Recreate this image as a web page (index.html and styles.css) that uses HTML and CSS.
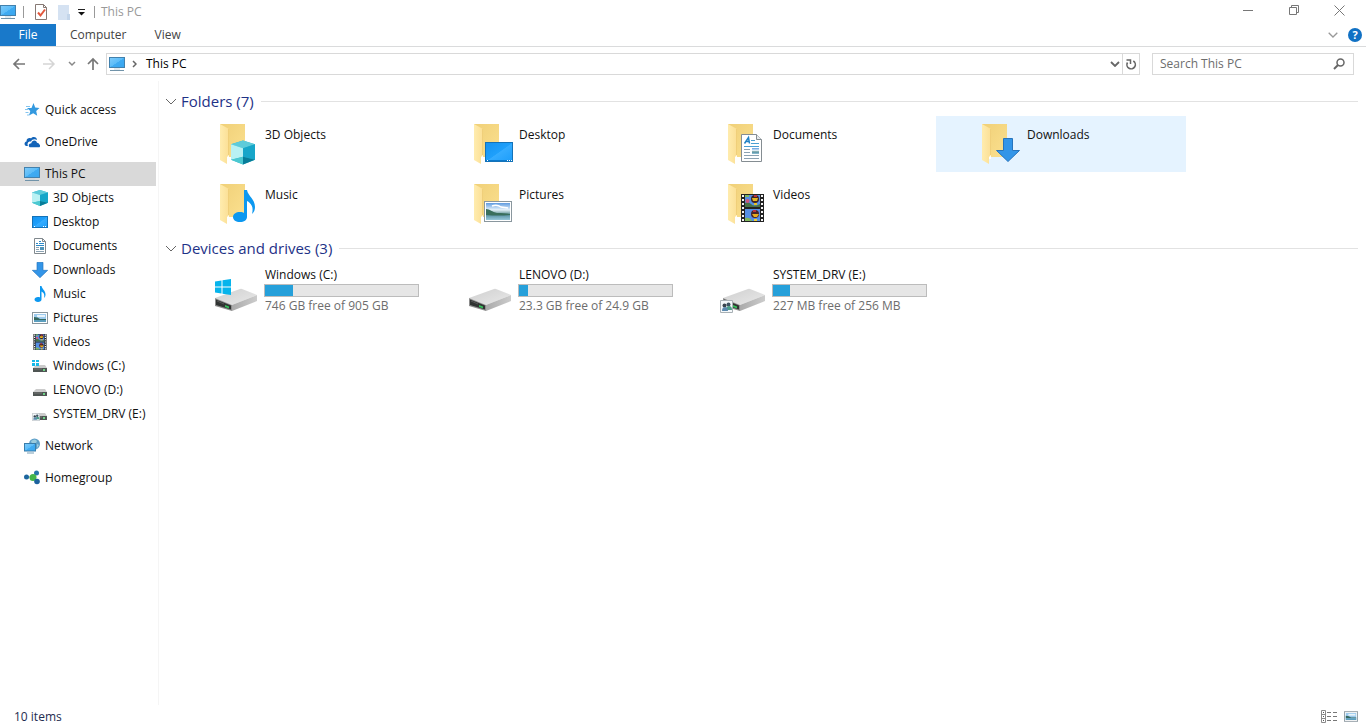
FILE: index.html
```html
<!DOCTYPE html>
<html lang="en">
<head>
<meta charset="utf-8">
<title>This PC</title>
<link rel="stylesheet" href="styles.css">
</head>
<body>
<svg class="defs" aria-hidden="true">
  <defs>
    <linearGradient id="g-screen" x1="0" y1="0" x2="1" y2="1"><stop offset="0" stop-color="#7fcbfb"/><stop offset=".5" stop-color="#5bbcf8"/><stop offset=".52" stop-color="#3fabf2"/><stop offset="1" stop-color="#3aa6ef"/></linearGradient>
    <linearGradient id="g-desk" x1="0" y1="0" x2="1" y2="1"><stop offset="0" stop-color="#1492f0"/><stop offset=".5" stop-color="#1fa0fb"/><stop offset=".52" stop-color="#35acff"/><stop offset="1" stop-color="#1c9dfa"/></linearGradient>
    <linearGradient id="g-back" x1="0" y1="0" x2="1" y2="1"><stop offset="0" stop-color="#f0d078"/><stop offset="1" stop-color="#fbe08f"/></linearGradient>
    <linearGradient id="g-flap" x1="0" y1="0" x2="1" y2="0"><stop offset="0" stop-color="#ffecae"/><stop offset="1" stop-color="#fbdf95"/></linearGradient>
    <linearGradient id="g-sky" x1="0" y1="0" x2="0" y2="1"><stop offset="0" stop-color="#5f9be0"/><stop offset=".4" stop-color="#e6f2fa"/><stop offset=".6" stop-color="#7fa9ac"/><stop offset=".7" stop-color="#5a93a5"/><stop offset="1" stop-color="#98c8da"/></linearGradient>
    <linearGradient id="g-top" x1="0" y1="0" x2="1" y2="1"><stop offset="0" stop-color="#cfcfcf"/><stop offset="1" stop-color="#e9e9e9"/></linearGradient>
    <linearGradient id="g-side" x1="0" y1="0" x2="1" y2="0"><stop offset="0" stop-color="#aaa"/><stop offset="1" stop-color="#ccc"/></linearGradient>
  </defs>
  <symbol id="pc" viewBox="0 0 16 16">
    <rect x=".5" y="1.5" width="15" height="10" fill="url(#g-screen)" stroke="#4281ad"/>
    <path d="M5 13h6" stroke="#c5d5df"/><path d="M1 14.5h14" stroke="#7193a9"/>
  </symbol>
  <symbol id="cube" viewBox="0 0 25 25">
    <path d="M0 4 12.500 0 25 4v16l-12.500 5L0 20z" fill="#36b8cc"/>
    <path d="M0 4 12.500 0 25 4 12.500 8z" fill="#5ecbda"/>
    <path d="M0 4 12.500 8v9L0 20z" fill="#b9f1f3"/>
    <path d="M12.500 8 25 4v16l-12.500-3z" fill="#17a6c9"/>
    <path d="M0 20l12.500-3v8z" fill="#4cc9d1"/><path d="M25 20l-12.500-3v8z" fill="#077d99"/>
  </symbol>
  <symbol id="desktop" viewBox="0 0 28 20">
    <rect x=".5" y=".5" width="27" height="19" fill="url(#g-desk)" stroke="#1472b8"/>
    <path d="M1 18.500h26" stroke="#0b78ca"/><path d="M2 18.500h1M22 18.500h1M24 18.500h1M26 18.500h1" stroke="#fff"/>
  </symbol>
  <symbol id="desktop-small" viewBox="0 0 16 12">
    <rect x=".5" y=".5" width="15" height="11" fill="url(#g-desk)" stroke="#1472b8"/><path d="M2 10.500h1M11 10.500h1M13 10.500h1" stroke="#fff"/>
  </symbol>
  <symbol id="doc" viewBox="0 0 21 28">
    <path d="M.5.5h15l5 5v22H.5z" fill="#fff" stroke="#858d92"/><path d="M15.500.5v5h5" fill="#e6e9eb" stroke="#858d92"/>
    <path d="M3.500 9.500 7.500 3.500 8.500 9.500M5 7.500h3" stroke="#2182c4" stroke-width="1.500" fill="none"/>
    <path d="M10 6.500h4M10 9.500h8M3 12.500h15" stroke="#4aa0d3"/>
    <path d="M3 15.500h6M3 18.500h6M3 21.500h15M3 24.500h15" stroke="#8ba2b2"/>
    <rect x="11" y="14" width="7" height="6" fill="url(#g-sky)"/>
  </symbol>
  <symbol id="doc-small" viewBox="0 0 16 16">
    <path d="M2.500.5h8l3 3v12h-11z" fill="#fff" stroke="#80888d"/><path d="M10.500.5v3h3" fill="none" stroke="#80888d"/>
    <path d="M4 5.500h2M7 3.500h2M7 5.500h5M4 7.500h8" stroke="#2b8ac8"/><path d="M4 9.500h3M4 11.500h3M4 13.500h8" stroke="#8ba2b2"/><path d="M8 9h4v3H8z" fill="#4f93b8"/>
  </symbol>
  <symbol id="down" viewBox="0 0 24 24">
    <path d="M7.500.5h9v12h7L12 23.500.500 12.500h7z" fill="#3395e8" stroke="#2674bd"/>
  </symbol>
  <symbol id="note" viewBox="0 0 22 32">
    <path d="M11 0h3c1 6 8 9 8 17 0 3-1 5-3 7 2-7-1-11-5-13v16c0 3-3 5-7 5s-7-2-7-5 3-5 7-5c2 0 3 0 4 1z" fill="#0c98f0"/>
  </symbol>
  <symbol id="picture" viewBox="0 0 28 21">
    <rect x=".5" y=".5" width="27" height="20" fill="#fff" stroke="#8a979e"/>
    <rect x="2" y="2" width="24" height="17" fill="url(#g-sky)"/>
    <path d="M2 8c4 0 6 3 11 4 5 0 9 0 13 1v1q-12 1-24 0z" fill="#3a6f5c"/><path d="M8 5q5-2 9 1l7 1" stroke="#fff" stroke-width="1.500" fill="none"/>
  </symbol>
  <symbol id="picture-small" viewBox="0 0 16 12">
    <rect x=".5" y=".5" width="15" height="11" fill="#fff" stroke="#8a979e"/>
    <rect x="2" y="2" width="12" height="8" fill="#9dcbee"/><path d="M5 3h8v2H5z" fill="#e9f4fb"/><path d="M2 5q4 0 6 2h6v1H2z" fill="#35685f"/><path d="M2 8h12v2H2z" fill="#5c9fbe"/>
  </symbol>
  <symbol id="film" viewBox="0 0 23 28">
    <path d="M0 0h23v28H0z" fill="#222"/>
    <path d="M2 1v27M21 1v27" stroke="#f5f5f5" stroke-width="2" stroke-dasharray="2 2"/>
    <path d="M4 1h15v12H4zM4 15h15v12H4z" fill="#568fe3"/>
    <path d="M4 9q3-2 6 1t9 0v3H4z" fill="#487247"/><path d="M4 1h4v2H4zM4 24q5-1 7 3H4z" fill="#80b75c"/>
    <ellipse cx="14" cy="5" rx="4" ry="4" fill="#3b2326"/><path d="M11 4h6l-1 3h-4z" fill="#e5b520"/><path d="M13 9h3v2h-3z" fill="#e4c22a"/>
    <circle cx="6.500" cy="7" r="2" fill="#cd587b"/><ellipse cx="14" cy="20" rx="4" ry="4" fill="#482527"/><path d="M11 20h7l-2 3h-3z" fill="#e5ad20"/><path d="M13 1h3v2h-3zM12 16h3v2h-3z" fill="#ba3540"/><path d="M13 25h3v2h-3z" fill="#f0cf33"/>
  </symbol>
  <symbol id="folder" viewBox="0 0 48 48">
    <path d="M8 4h25v33H15z" fill="url(#g-back)"/><path d="M13 33h4v6h-4z" fill="#fff" opacity=".9"/>
    <path d="M8 4l9 5v26l-2 2v7l-7-4z" fill="url(#g-flap)"/><path d="M16.500 9v26" stroke="#f0cf7a"/>
  </symbol>
  <symbol id="drive" viewBox="0 0 48 48">
    <path d="M3 31 28 22q1-.5 2 0l15 6-25 10z" fill="url(#g-top)"/>
    <path d="M20 38l25-10v6L20 44z" fill="url(#g-side)"/>
    <path d="M3 31l17 7v6L3 39z" fill="#8d8d8d"/><path d="M4 32.500l15 6v4L4 38z" fill="#303332"/>
    <path d="M13 38l4 1.500v2L13 40z" fill="#35bf5b"/><path d="M5 34l7 3" stroke="#555"/>
  </symbol>
  <symbol id="winlogo" viewBox="0 0 16 16">
    <path d="M0 2.500 6.500 1.500V7.500H0zM7.500 1.300 16 0v7.500H7.500zM0 8.500h6.500v6L0 13.500zM7.500 8.500H16V16l-8.500-1.300z" fill="#06b4ec"/>
  </symbol>
  <symbol id="minidrive" viewBox="0 0 16 16">
    <path d="M4 7h9l2 3H1z" fill="#cbcbcb"/><path d="M1 10h14v4H1z" fill="#4f5553"/><path d="M2 11h8" stroke="#777"/><path d="M11 12h2" stroke="#6fd387" stroke-width="2"/>
  </symbol>
  <symbol id="people" viewBox="0 0 13 13">
    <path d="M.5.5h12v12H.5z" fill="#f4f8fa" stroke="#a8b0b5"/>
    <circle cx="8.500" cy="4.500" r="2" fill="#3e5362"/><path d="M6 10q0-4 3-4t3 4z" fill="#4b9e88"/>
    <circle cx="4.500" cy="5.500" r="2" fill="#38444e"/><path d="M2 11q0-4 3-4t3 4z" fill="#5b89ae"/>
  </symbol>
  <symbol id="chev" viewBox="0 0 10 6"><path d="M.7.7 5 5 9.300.7" fill="none" stroke="currentColor" stroke-width="1.300"/></symbol>
  <symbol id="chev-wide" viewBox="0 0 12 7"><path d="M1 1l5 5 5-5" fill="none" stroke="currentColor"/></symbol>
</svg>

<div class="window">
  <header class="titlebar">
    <svg class="i16"><use href="#pc"/></svg>
    <span class="sep"></span>
    <button class="qat" aria-label="Properties"><svg class="i16" viewBox="0 0 16 16"><path d="M2.500.5h8l3 3v12h-11z" fill="#fff" stroke="#867974"/><path d="M10.500.5v3h3" fill="none" stroke="#867974"/><path d="M5 8.500 7.500 11.500 12 5.500" fill="none" stroke="#e2573c" stroke-width="2"/></svg></button>
    <button class="qat" aria-label="New folder"><svg class="i16" viewBox="0 0 16 16"><path d="M2 1h11v15H2z" fill="#d5e2f2"/><path d="M11 10h3v6h-3z" fill="#c3d5ea"/></svg></button>
    <button class="qat more" aria-label="Customize toolbar"><svg viewBox="0 0 8 8" width="8" height="8"><path d="M1 1.500h7" stroke="#222"/><path d="M1 4h7L4.500 7.500z" fill="#111"/></svg></button>
    <span class="sep"></span>
    <h1 class="title">This PC</h1>
    <div class="caption">
      <button aria-label="Minimize"><svg viewBox="0 0 11 11"><path d="M0 5.500h10" stroke="#777"/></svg></button>
      <button aria-label="Restore"><svg viewBox="0 0 11 11"><path d="M.5 2.500h7v7h-7zM2.500 2.500v-2h7v7h-2" fill="none" stroke="#777"/></svg></button>
      <button aria-label="Close"><svg viewBox="0 0 11 11"><path d="M.5.5l10 10M10.500.5l-10 10" stroke="#777"/></svg></button>
    </div>
  </header>

  <nav class="ribbon" aria-label="Ribbon">
    <button class="tab file">File</button>
    <button class="tab">Computer</button>
    <button class="tab">View</button>
    <div class="ribbon-end">
      <button aria-label="Expand ribbon"><svg class="chev pale"><use href="#chev"/></svg></button>
      <button class="help" aria-label="Help">?</button>
    </div>
  </nav>

  <div class="navbar">
    <div class="arrows">
      <button aria-label="Back"><svg viewBox="0 0 14 12" width="14" height="12"><path d="M13 6H2M7 1 2 6l5 5" fill="none" stroke="#777" stroke-width="1.700"/></svg></button>
      <button aria-label="Forward"><svg viewBox="0 0 14 12" width="14" height="12"><path d="M1 6h11M7 1l5 5-5 5" fill="none" stroke="#d5d5d5" stroke-width="1.500"/></svg></button>
      <button class="recent" aria-label="Recent locations"><svg viewBox="0 0 8 6" width="8" height="6"><path d="M1 1l3 3 3-3" fill="none" stroke="#888" stroke-width="1.500"/></svg></button>
      <button class="up" aria-label="Up"><svg viewBox="0 0 12 14" width="12" height="14"><path d="M6 13V2M1 7l5-5 5 5" fill="none" stroke="#777" stroke-width="1.700"/></svg></button>
    </div>
    <div class="address">
      <svg class="i16"><use href="#pc"/></svg>
      <svg class="crumb" viewBox="0 0 5 8" width="5" height="8"><path d="M1 1l3 3-3 3" fill="none" stroke="#666" stroke-width="1.500"/></svg>
      <button class="place">This PC</button>
      <button class="drop" aria-label="Previous locations"><svg class="chev" viewBox="0 0 10 6"><path d="M1 1l4 4 4-4" fill="none" stroke="#666" stroke-width="1.800"/></svg></button>
      <button class="refresh" aria-label="Refresh"><svg viewBox="0 0 12 13" width="12" height="13"><path d="M8.300 3A4.200 4.200 0 1 1 2.500 4.500" fill="none" stroke="#666" stroke-width="1.600"/><path d="M1.500 2H5.500V6" fill="none" stroke="#666" stroke-width="1.500"/></svg></button>
    </div>
    <label class="search">
      <input type="search" placeholder="Search This PC" aria-label="Search This PC">
      <svg viewBox="0 0 12 12" width="12" height="12"><circle cx="7.500" cy="4.500" r="3.500" fill="none" stroke="#666" stroke-width="1.500"/><path d="M5 7 1 11" stroke="#666" stroke-width="2"/></svg>
    </label>
  </div>

  <div class="body">
    <nav class="tree" aria-label="Navigation pane">
      <a href="#"><svg class="i16" viewBox="0 0 16 16"><path d="M9.500 1l1.700 4.400 4.300.5-3.300 3 1 4.800-4-2.500L5 13.500l1.300-4.600L3 6h4.500z" fill="#3399df"/><path d="M2 4.500h4M1 7.500h3M1.500 10.500h3M3 13h2" stroke="#83c4ef"/></svg>Quick access</a>
      <a href="#"><svg class="i16" viewBox="0 0 16 16"><path d="M4 12H2C0 11 0 8 2.500 7.500 2.300 4 6 3.500 7 4.500 9 2 13 3 13 6 11 4.500 8 5 7 7.500 4 7 3 9.500 4 12z" fill="#1263b8"/><path d="M6.500 13.300c-2.500-.3-2.300-4 .8-4 .7-3.500 5-3.500 5.700-.5 1.500 0 2 .8 2 1.500 1.700.3 1.500 3-.5 3z" fill="#1263b8"/></svg>OneDrive</a>
      <div class="branch">
        <a href="#" class="current"><svg class="i16"><use href="#pc"/></svg>This PC</a>
        <a href="#" class="sub"><svg class="i16"><use href="#cube"/></svg>3D Objects</a>
        <a href="#" class="sub"><svg class="i16"><use href="#desktop-small"/></svg>Desktop</a>
        <a href="#" class="sub"><svg class="i16"><use href="#doc-small"/></svg>Documents</a>
        <a href="#" class="sub"><svg class="i16"><use href="#down"/></svg>Downloads</a>
        <a href="#" class="sub"><svg class="i16"><use href="#note"/></svg>Music</a>
        <a href="#" class="sub"><svg class="i16"><use href="#picture-small"/></svg>Pictures</a>
        <a href="#" class="sub"><svg class="i16"><use href="#film"/></svg>Videos</a>
        <a href="#" class="sub"><svg class="i16" viewBox="0 0 16 16"><use href="#minidrive" width="16" height="16"/><path d="M0 2h3v2H0zM4 2h3v2H4zM0 5h3v3H0zM4 5h3v3H4z" fill="#18b9e8"/></svg>Windows (C:)</a>
        <a href="#" class="sub"><svg class="i16"><use href="#minidrive"/></svg>LENOVO (D:)</a>
        <a href="#" class="sub"><svg class="i16" viewBox="0 0 16 16"><use href="#minidrive" width="16" height="16"/><use href="#people" x="0" y="7" width="8" height="8"/></svg>SYSTEM_DRV (E:)</a>
      </div>
      <a href="#"><svg class="i16" viewBox="0 0 16 16"><circle cx="10.500" cy="6" r="5.500" fill="#5d9fc8"/><path d="M7 3q4-3 6 0l-2 4-3-1zM13 6l2 1-2 3z" fill="#9bcbdd"/><rect x=".5" y="5.500" width="11" height="7.500" fill="url(#g-screen)" stroke="#397daa"/><path d="M3 15h7" stroke="#789fb6"/></svg>Network</a>
      <a href="#"><svg class="i16" viewBox="0 0 16 16"><path d="M3 7h6l3-4M9 8l4 4" stroke="#9dbac2" fill="none"/><circle cx="2.500" cy="7" r="2.500" fill="#1d669f"/><circle cx="12.500" cy="3" r="2.500" fill="#2676a9"/><circle cx="9" cy="7.500" r="3.500" fill="#45b649"/><circle cx="13" cy="11.500" r="2.800" fill="#1c629d"/></svg>Homegroup</a>
    </nav>

    <main class="content">
      <section>
        <h2><svg class="chev-wide"><use href="#chev-wide"/></svg>Folders (7)</h2>
        <div class="tiles">
          <a href="#" class="tile"><svg class="i48" viewBox="0 0 48 48"><use href="#folder"/><use href="#cube" x="19" y="20" width="24" height="25"/></svg><span>3D Objects</span></a>
          <a href="#" class="tile"><svg class="i48" viewBox="0 0 48 48"><use href="#folder"/><use href="#desktop" x="19" y="22" width="28" height="20"/></svg><span>Desktop</span></a>
          <a href="#" class="tile"><svg class="i48" viewBox="0 0 48 48"><use href="#folder"/><use href="#doc" x="21" y="14" width="21" height="28"/></svg><span>Documents</span></a>
          <a href="#" class="tile hover"><svg class="i48" viewBox="0 0 48 48"><use href="#folder"/><use href="#down" x="22" y="18" width="24" height="24"/></svg><span>Downloads</span></a>
          <a href="#" class="tile"><svg class="i48" viewBox="0 0 48 48"><use href="#folder"/><use href="#note" x="21" y="10" width="22" height="32"/></svg><span>Music</span></a>
          <a href="#" class="tile"><svg class="i48" viewBox="0 0 48 48"><use href="#folder"/><use href="#picture" x="18" y="21" width="28" height="21"/></svg><span>Pictures</span></a>
          <a href="#" class="tile"><svg class="i48" viewBox="0 0 48 48"><use href="#folder"/><use href="#film" x="21" y="14" width="23" height="28"/></svg><span>Videos</span></a>
        </div>
      </section>
      <section>
        <h2><svg class="chev-wide"><use href="#chev-wide"/></svg>Devices and drives (3)</h2>
        <div class="tiles">
          <a href="#" class="tile drive"><svg class="i48" viewBox="0 0 48 48"><use href="#drive"/><use href="#winlogo" x="3" y="12" width="16" height="16"/></svg><span class="info"><span>Windows (C:)</span><span class="meter"><span class="used" style="width:18%"></span></span><span class="free">746 GB free of 905 GB</span></span></a>
          <a href="#" class="tile drive"><svg class="i48" viewBox="0 0 48 48"><use href="#drive"/></svg><span class="info"><span>LENOVO (D:)</span><span class="meter"><span class="used" style="width:6%"></span></span><span class="free">23.3 GB free of 24.9 GB</span></span></a>
          <a href="#" class="tile drive"><svg class="i48" viewBox="0 0 48 48"><use href="#drive"/><use href="#people" x="0" y="33" width="13" height="13"/></svg><span class="info"><span>SYSTEM_DRV (E:)</span><span class="meter"><span class="used" style="width:11%"></span></span><span class="free">227 MB free of 256 MB</span></span></a>
        </div>
      </section>
    </main>
  </div>

  <footer class="status">
    <span>10 items</span>
    <div class="views">
      <button aria-label="Details view"><svg viewBox="0 0 16 13" width="16" height="13"><path d="M.5.5h4v12h-4zM0 4.500h5M0 8.500h5" fill="none" stroke="#8a8a8a"/><path d="M2 2.500h1M2 6.500h1M2 10.500h1" stroke="#555"/><path d="M6 2.500h4M12 2.500h4M6 6.500h4M12 6.500h4M6 10.500h4M12 10.500h4" stroke="#777"/></svg></button>
      <button aria-label="Large icons view"><svg width="14" height="11"><use href="#picture-small"/></svg></button>
    </div>
  </footer>
</div>
</body>
</html>
```

FILE: styles.css
```css
* { box-sizing: border-box; }
body { margin: 0; font: 12px/16px "Open Sans", "Noto Sans", sans-serif; color: #111; background: #fff; }
button { border: 0; padding: 0; background: none; font: inherit; color: inherit; display: flex; align-items: center; justify-content: center; }
a { color: inherit; text-decoration: none; }
h1, h2 { margin: 0; font-weight: normal; }
svg { display: block; flex: none; }
.defs { position: absolute; width: 0; height: 0; }
.i16 { width: 16px; height: 16px; }
.i48 { width: 48px; height: 48px; }
.chev { width: 10px; height: 6px; color: #666; }
.chev-wide { width: 12px; height: 7px; color: #666; }
.window { min-height: 100vh; display: flex; flex-direction: column; }

.titlebar { height: 24px; display: flex; align-items: center; }
.sep { width: 1px; height: 12px; background: #999; margin: 0 6px 0 7px; }
.titlebar .sep:first-of-type { margin-right: 5px; }
.qat { width: 23px; }
.qat.more { width: 12px; }
.titlebar .title { font-size: 12px; color: #999; }
.caption { margin-left: auto; display: flex; align-self: stretch; padding-bottom: 3px; }
.caption button { width: 46px; }
.caption svg { width: 11px; height: 11px; }
.caption button:last-child { padding-right: 2px; }
.caption { padding-right: 3px; }

.ribbon { height: 23px; display: flex; border-bottom: 1px solid #dadbdc; }
.tab { padding: 0 14px; color: #444; }
.tab.file { width: 56px; background: #1979ca; color: #fff; }
.ribbon-end { margin-left: auto; display: flex; align-items: center; gap: 10px; padding-right: 4px; }
.chev.pale { color: #999; }
.help { width: 14px; height: 14px; border-radius: 50%; background: #1071c4; color: #fff; font-size: 11px; font-weight: bold; }

.navbar { height: 34px; display: flex; align-items: center; padding: 0 12px; }
.arrows { width: 94px; flex: none; display: flex; align-items: center; gap: 16px; }
.arrows .recent { margin-left: -4px; }
.arrows .up { margin-left: -5px; }
.address { flex: 1; height: 22px; display: flex; align-items: center; border: 1px solid #d9d9d9; padding-left: 2px; }
.crumb { margin: 0 9px 0 7px; }
.place { color: #000; }
.drop { margin-left: auto; width: 15px; height: 20px; }
.refresh { width: 17px; height: 20px; border-left: 1px solid #d9d9d9; }
.search { width: 202px; height: 22px; margin-left: 12px; padding: 0 8px 0 7px; display: flex; align-items: center; border: 1px solid #d9d9d9; }
.search input { flex: 1; min-width: 0; padding: 0; border: 0; outline: 0; background: none; font: inherit; }
.search input::placeholder { color: #6d6d6d; opacity: 1; }

.body { flex: 1; display: flex; }
.tree { width: 159px; flex: none; border-right: 1px solid #f5f5f5; padding: 17px 2px 0 0; display: flex; flex-direction: column; gap: 8px; }
.tree a { height: 24px; display: flex; align-items: center; gap: 5px; padding-left: 24px; white-space: nowrap; }
.tree .sub { padding-left: 32px; }
.tree .current { background: #d9d9d9; }

.content { flex: 1; padding: 9px 8px 0 6px; }
.content h2 { height: 22px; display: flex; align-items: center; gap: 4px; font-size: 15px; line-height: 20px; color: #1e3287; }
.content h2::after { content: ""; flex: 1; height: 1px; margin-left: 3px; background: #e2e2e2; }
.tiles { display: grid; grid-template-columns: repeat(auto-fill, 250px); gap: 4px; padding: 4px 0 5px 9px; }
.tile { height: 56px; display: flex; align-items: flex-start; gap: 5px; padding: 4px 0 0 38px; }
.tile > span { padding-top: 7px; }
.tile.hover { background: #e5f3ff; }
.tile.drive { gap: 4px; }
.tile .info { padding: 0; display: flex; flex-direction: column; }
.info > span { padding-left: 1px; }
.info .meter { width: 155px; height: 13px; padding: 0; margin-top: 1px; margin-bottom: 1px; background: #e6e6e6; border: 1px solid #bcbcbc; }
.used { display: block; height: 100%; background: #26a0da; }
.free { color: #6d6d6d; }

.status { height: 23px; display: flex; align-items: center; padding: 0 8px 0 14px; color: #1e2c50; }
.views { margin-left: auto; display: flex; align-items: center; gap: 7px; }
```
